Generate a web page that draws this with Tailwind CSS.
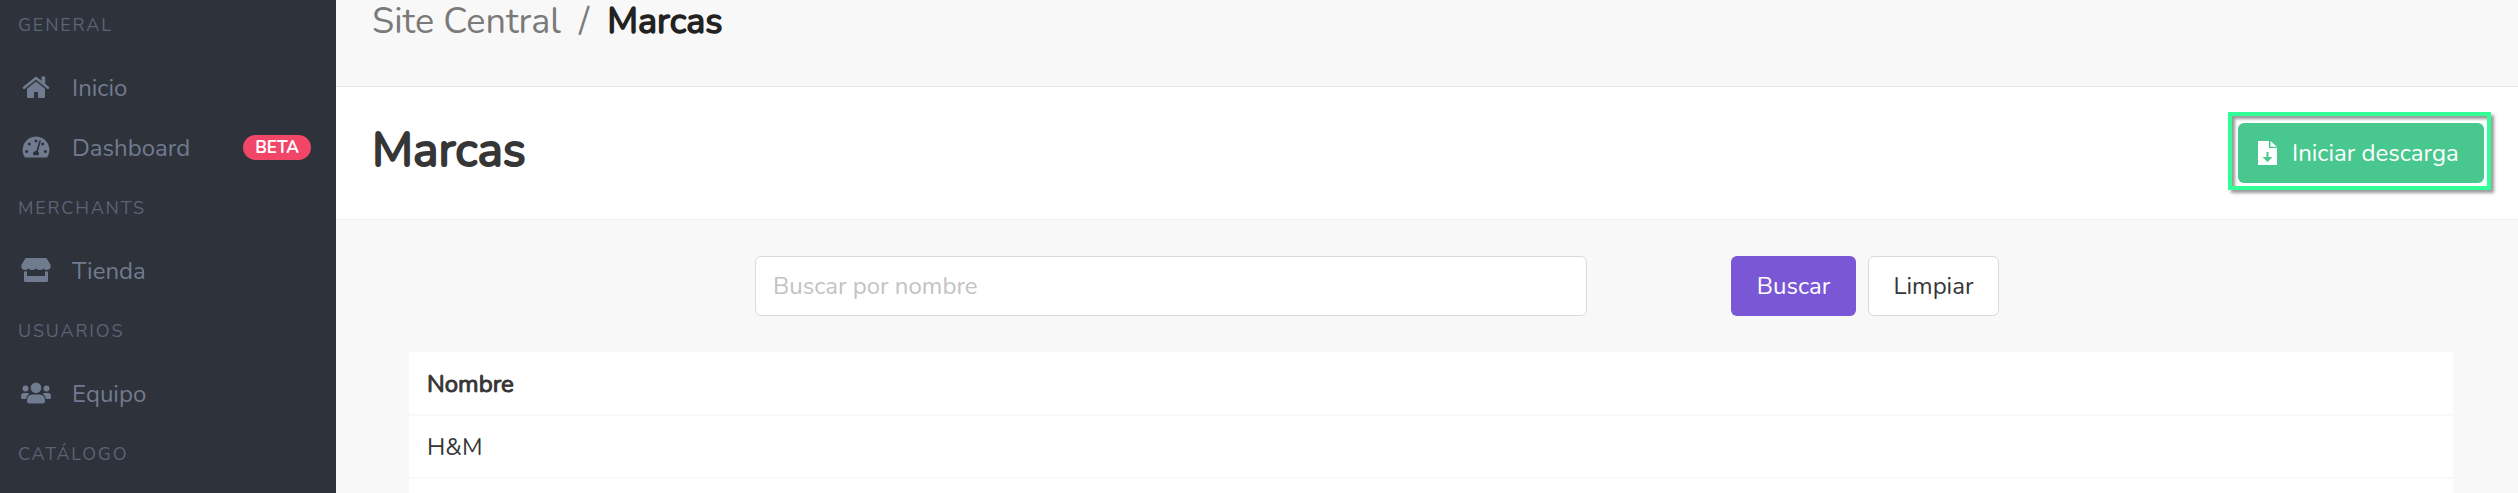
<!DOCTYPE html>
<html lang="es">
<head>
<meta charset="utf-8">
<meta name="viewport" content="width=device-width, initial-scale=1">
<title>Marcas</title>
<script src="https://cdn.jsdelivr.net/npm/@tailwindcss/browser@4"></script>
</head>
<body class="flex h-screen overflow-hidden bg-[#f8f8f8] font-['Nunito',Lato,sans-serif] text-2xl text-[#363636]">
<aside class="w-[336px] shrink-0 overflow-hidden bg-[#2e323a] text-[#717b8f]">
  <nav aria-label="Principal" class="-mt-1.5">
    <h2 class="flex h-[63px] items-center pb-0.5 pl-[18px] text-lg tracking-widest text-[#5b6375]">GENERAL</h2>
    <a href="#" class="flex h-[60px] items-center pl-[18px]">
      <svg class="mr-[18px] h-6 w-9" viewBox="0 0 36 24" fill="currentColor" aria-hidden="true"><path d="M18 6.4 9 13.8V22q0 1 1 1h5q1 0 1-1v-4.300q0-.7.8-.7h2.400q.8 0 .8.700V22q0 1 1 1h5q1 0 1-1v-8.200Z"/><path d="M6 12.700 18 2.900 30 12.700" fill="none" stroke="currentColor" stroke-width="2.600" stroke-linecap="round" stroke-linejoin="round"/><path d="M23.500 1.500h3q.7 0 .7.700V9.500l-3.700-3Z"/></svg>
      <span class="pt-0.5">Inicio</span>
    </a>
    <a href="#" class="flex h-[60px] items-center pl-[18px]">
      <svg class="mr-[18px] h-6 w-9" viewBox="0 0 36 24" fill="currentColor" aria-hidden="true"><path d="M18 1.500A13.500 13.500 0 0 0 6.300 21.700q.5.800 1.500.8h20.400q1 0 1.500-.8A13.500 13.500 0 0 0 18 1.500Z"/><g fill="#2e323a"><circle cx="18" cy="6" r="1.500"/><circle cx="11.300" cy="9" r="1.500"/><circle cx="24.700" cy="9" r="1.500"/><circle cx="8.600" cy="16.500" r="1.500"/><circle cx="27.400" cy="16.500" r="1.500"/><path d="M15 19a3 3 0 1 1 6 0q0 .6-.4 1.200h-5.200Q15 19.600 15 19Z"/></g><path d="m22 6.200-3.500 12" stroke="#2e323a" stroke-width="1.700" stroke-linecap="round"/></svg>
      <span class="pt-0.5">Dashboard</span>
      <span class="mr-[25px] ml-auto flex h-[25px] w-[68px] items-center justify-center rounded-full bg-[#f14668] pt-0.5 text-[17px] font-bold text-white">BETA</span>
    </a>
    <h2 class="flex h-[63px] items-center pb-0.5 pl-[18px] text-lg tracking-widest text-[#5b6375]">MERCHANTS</h2>
    <a href="#" class="flex h-[60px] items-center pl-[18px]">
      <svg class="mr-[18px] h-6 w-9" viewBox="0 0 36 24" fill="currentColor" aria-hidden="true"><path d="M8.500 0h19q.8 0 1.200.6l3.300 5.200c1.700 2.800.2 6.200-3 6.200-1.500 0-2.700-.6-3.600-1.600A5 5 0 0 1 21.700 12a5 5 0 0 1-3.700-1.600A5 5 0 0 1 14.300 12a5 5 0 0 1-3.700-1.600A5 5 0 0 1 7 12c-3.200 0-4.700-3.400-3-6.200L7.300.6Q7.700 0 8.500 0Z"/><path d="M6 13.300q1.500.4 3 0V18h18v-4.700q1.500.4 3 0v9.200q0 1.500-1.500 1.500h-21Q6 24 6 22.500Z"/></svg>
      <span class="pt-0.5">Tienda</span>
    </a>
    <h2 class="flex h-[63px] items-center pb-0.5 pl-[18px] text-lg tracking-widest text-[#5b6375]">USUARIOS</h2>
    <a href="#" class="flex h-[60px] items-center pl-[18px]">
      <svg class="mr-[18px] h-6 w-9" viewBox="0 0 36 24" fill="currentColor" aria-hidden="true"><circle cx="18" cy="6.700" r="5.300"/><circle cx="7.500" cy="7.500" r="3"/><circle cx="28.500" cy="7.500" r="3"/><path d="M14.200 13.500h7.600q5.200.7 5.200 6v.700q0 2.300-2.200 2.300H11.200Q9 22.500 9 20.200v-.700q0-5.300 5.200-6Z"/><path d="M6 12h3q1.300 0 2.200.9A7 7 0 0 0 8 18H4.500Q3 18 3 16.500V15q0-3 3-3ZM30 12h-3q-1.300 0-2.200.9A7 7 0 0 1 28 18h3.500q1.500 0 1.500-1.500V15q0-3-3-3Z"/></svg>
      <span class="pt-0.5">Equipo</span>
    </a>
    <h2 class="flex h-[63px] items-center pb-0.5 pl-[18px] text-lg tracking-widest text-[#5b6375]">CATÁLOGO</h2>
  </nav>
</aside>
<main class="min-w-0 flex-1">
  <nav aria-label="Ruta" class="h-[87px] border-b border-[#e6e6e6] px-9">
    <ol class="flex gap-[18px] text-4xl leading-[44px]">
      <li><a href="#" class="text-[#7a7a7a]">Site Central</a></li>
      <li aria-hidden="true" class="text-[#7a7a7a]">/</li>
      <li class="text-[#222] [-webkit-text-stroke:1.5px_#222]" aria-current="page">Marcas</li>
    </ol>
  </nav>
  <header class="flex h-[133px] items-start justify-between border-b border-[#eee] bg-white pt-[25px] pr-[27px] pl-9">
    <h1 class="text-5xl leading-[76px] [-webkit-text-stroke:2px_#363636]">Marcas</h1>
    <div class="border-4 border-[#33ff99] pt-[7px] pr-[3px] pb-[3px] pl-1.5 shadow-[3px_3px_3px_rgba(0,0,0,0.4),inset_3px_3px_3px_rgba(0,0,0,0.4)]">
      <button type="button" class="flex h-[60px] w-[246px] items-center rounded-md bg-[#48c78e] pl-5 text-white">
        <svg class="mr-[15px] h-6 w-[19px]" viewBox="0 0 19 24" fill="currentColor" aria-hidden="true"><path fill-rule="evenodd" d="M0 0h11v7h8v17H0ZM8.500 11v5H4.500l5 5 5-5h-4v-5Z"/><path d="M12.500 0 19 5.700h-6.500Z"/></svg>
        Iniciar descarga
      </button>
    </div>
  </header>
  <section class="pt-9 pr-[65px] pl-[73px]">
    <form class="grid grid-cols-[346fr_832fr_144fr_722fr]">
      <input type="search" aria-label="Buscar por nombre" placeholder="Buscar por nombre" class="col-start-2 h-[60px] min-w-0 rounded-md border border-[#dbdbdb] bg-white px-[17px] placeholder:text-[#c3c3c3]">
      <div class="col-start-4 flex gap-3">
        <button type="submit" class="h-[60px] w-[125px] rounded-md bg-[#7957d5] text-white">Buscar</button>
        <button type="reset" class="h-[60px] w-[131px] rounded-md border border-[#dbdbdb] bg-white">Limpiar</button>
      </div>
    </form>
    <table class="mt-9 w-full bg-white text-left">
      <thead><tr class="h-[63px] border-b-2 border-[#f9f9f9]"><th scope="col" class="px-[18px] pt-0.5 font-normal [-webkit-text-stroke:1px_#363636]">Nombre</th></tr></thead>
      <tbody>
        <tr class="h-[63px] border-b-2 border-[#f9f9f9]"><td class="px-[18px]">H&amp;M</td></tr>
        <tr class="h-[63px]"><td class="px-[18px]"></td></tr>
      </tbody>
    </table>
  </section>
</main>
</body>
</html>
